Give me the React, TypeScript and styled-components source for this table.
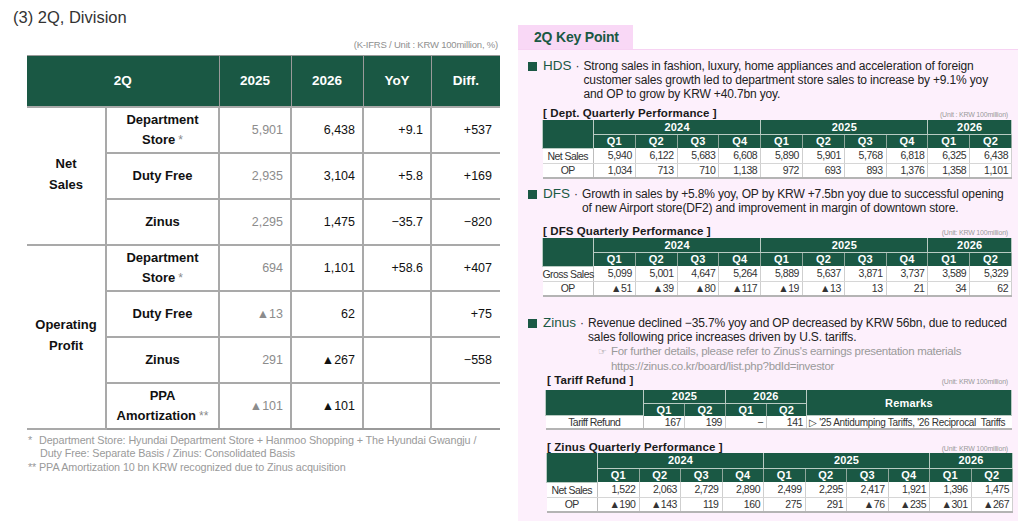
import React from "react";
import styled, { createGlobalStyle } from "styled-components";

const GlobalStyle = createGlobalStyle`
  html, body { margin: 0; padding: 0; background: #ffffff; }
  body {
    width: 1020px; height: 521px; overflow: hidden;
    font-family: "Liberation Sans", Arial, sans-serif;
    color: #222;
  }
  * { box-sizing: border-box; }
`;

const GREEN = "#1a5844";

const Page = styled.div`
  display: flex;
  width: 1020px;
  height: 521px;
`;

/* ---------------- Left ---------------- */
const Left = styled.section`
  width: 518px;
  display: flex;
  flex-direction: column;
`;

const Title = styled.h1`
  margin: 0;
  padding: 7px 0 0 13px;
  font-size: 16.5px;
  line-height: 20px;
  font-weight: 400;
  color: #333;
`;

const UnitNote = styled.div`
  margin-top: 12px;
  padding-right: 20px;
  text-align: right;
  font-size: 9.5px;
  line-height: 12px;
  color: #8f8f8f;
  letter-spacing: -0.2px;
`;

const DivTable = styled.table`
  margin: 4px 0 0 27px;
  width: 473px;
  border-collapse: collapse;
  table-layout: fixed;
`;

const Col = styled.col<{ $w: number }>`
  width: ${(p) => p.$w}px;
`;

const DivTh = styled.th`
  height: 51px;
  padding: 0;
  background: ${GREEN};
  color: #fff;
  font-size: 13.5px;
  font-weight: 700;
  text-align: center;
  border-top: 1px solid #9a9a9a;
  border-left: 1px solid #9a9a9a;
  border-bottom: 2px solid #a9a9a9;
  &:first-child { border-left: none; }
`;

const DivRow = styled.tr<{ $last?: boolean }>`
  height: 46px;
  & > td {
    border-bottom: 2px solid ${(p) => (p.$last ? "#9a9a9a" : "#a9a9a9")};
  }
`;

const GroupCell = styled.td`
  padding: 0 0 3px;
  text-align: center;
  font-size: 13px;
  font-weight: 700;
  line-height: 21px;
  color: #111;
  border-right: 2px solid #a9a9a9;
`;

const LabelCell = styled.td`
  padding: 0;
  text-align: center;
  font-size: 13px;
  font-weight: 700;
  line-height: 20px;
  color: #111;
  border-right: 2px solid #a9a9a9;
`;

const Star = styled.span`
  color: #8a8a8a;
  font-weight: 400;
  font-size: 12px;
  margin-left: 3px;
`;

const ValueCell = styled.td<{ $muted?: boolean }>`
  padding: 0 7px 0 0;
  text-align: right;
  font-size: 12.5px;
  color: ${(p) => (p.$muted ? "#8c8c8c" : "#111")};
  border-right: 2px solid #a9a9a9;
  &:last-child { border-right: none; padding-right: 8px; }
`;

const Footnotes = styled.div`
  margin: 4px 0 0 28px;
  font-size: 10.8px;
  line-height: 13.5px;
  color: #9a9a9a;
  letter-spacing: -0.1px;
`;

const FootLine = styled.div<{ $indent?: number }>`
  padding-left: ${(p) => p.$indent ?? 0}px;
  white-space: nowrap;
`;

const FootMark = styled.span`
  display: inline-block;
  width: 11px;
`;

/* ---------------- Right ---------------- */
const Right = styled.section`
  width: 500px;
  margin-top: 25px;
  display: flex;
  flex-direction: column;
`;

const Tab = styled.div`
  width: 115px;
  height: 24px;
  background: #f9d8f6;
  color: ${GREEN};
  font-size: 14px;
  font-weight: 700;
  line-height: 24px;
  padding-left: 16px;
  letter-spacing: -0.2px;
`;

const Panel = styled.div`
  flex: 1;
  background: #fdf0fc;
  border-top: 1px solid #f7d3f3;
  padding: 8px 7px 0 10px;
  display: flex;
  flex-direction: column;
`;

const Point = styled.div<{ $top: number }>`
  display: flex;
  align-items: flex-start;
  margin-top: ${(p) => p.$top}px;
`;

const Square = styled.span`
  width: 9px;
  height: 9px;
  background: ${GREEN};
  margin-top: 3px;
  flex: none;
`;

const PointLabel = styled.span`
  margin-left: 6px;
  color: ${GREEN};
  font-size: 13.5px;
  line-height: 14px;
  flex: none;
`;

const Bullet = styled.span`
  width: 8px;
  margin-left: 4px;
  font-size: 12px;
  line-height: 14px;
  color: #333;
  flex: none;
`;

const PointText = styled.div`
  font-size: 12px;
  line-height: 14px;
  color: #222;
  letter-spacing: -0.15px;
  white-space: nowrap;
`;

const Note = styled.div`
  padding-left: 10px;
  color: #9a9a9a;
  font-size: 11.5px;
  letter-spacing: -0.3px;
`;

const NoteMark = styled.span`
  display: inline-block;
  width: 13px;
  font-family: "DejaVu Sans", sans-serif;
  font-size: 10px;
  color: #9a9a9a;
`;

const TableHead = styled.div<{ $top: number; $left: number }>`
  display: flex;
  justify-content: space-between;
  align-items: flex-end;
  margin: ${(p) => p.$top}px 3px 0 ${(p) => p.$left}px;
  height: 12px;
`;

const TableTitle = styled.span`
  font-size: 11.5px;
  font-weight: 700;
  line-height: 12px;
  color: #1a1a1a;
  letter-spacing: 0.1px;
`;

const TableUnit = styled.span`
  font-size: 7px;
  line-height: 9px;
  color: #9a9a9a;
  letter-spacing: -0.2px;
`;

const QTable = styled.table<{ $left: number; $w: number; $top: number }>`
  margin: ${(p) => p.$top}px 0 0 ${(p) => p.$left}px;
  width: ${(p) => p.$w}px;
  border-collapse: collapse;
  table-layout: fixed;
`;

const HeadRow = styled.tr<{ $h: number }>`
  height: ${(p) => p.$h}px;
`;

const QTh = styled.th`
  padding: 0;
  background: ${GREEN};
  color: #fff;
  font-size: 11px;
  font-weight: 700;
  line-height: 12px;
  text-align: center;
  border: 1px solid #b9cbc3;
  border-top: none;
  letter-spacing: 0.2px;
`;

const QSubTh = styled(QTh)`
  border-left: 1px solid #8fa79c;
  border-right: 1px solid #8fa79c;
  border-bottom: none;
`;

const BodyRow = styled.tr<{ $h: number; $last?: boolean }>`
  height: ${(p) => p.$h}px;
  background: #ffffff;
  & > td {
    border-bottom: ${(p) => (p.$last ? "2px solid #b4b4b4" : "1px solid #d6d6d6")};
  }
`;

const QLabel = styled.td`
  padding: 0;
  text-align: center;
  font-size: 10.5px;
  line-height: 12px;
  color: #333;
  letter-spacing: -0.55px;
  border-right: 1px solid #bdbdbd;
  white-space: nowrap;
`;

const QVal = styled.td`
  padding: 0 3px 0 0;
  text-align: right;
  font-size: 10.5px;
  line-height: 12px;
  color: #333;
  letter-spacing: -0.45px;
  border-right: 1px solid #cfcfcf;
  white-space: nowrap;
`;

const Remark = styled.td`
  padding: 0 0 0 2px;
  text-align: left;
  font-size: 10px;
  line-height: 11px;
  color: #333;
  letter-spacing: -0.3px;
  white-space: nowrap;
  overflow: hidden;
`;

type QRow = { label: string; values: string[] };

const QUARTERS = ["Q1", "Q2", "Q3", "Q4", "Q1", "Q2", "Q3", "Q4", "Q1", "Q2"];

function QuarterTable({
  rows,
  left,
  width,
  labelW,
  top,
  h,
}: {
  rows: QRow[];
  left: number;
  width: number;
  labelW: number;
  top: number;
  h: [number, number, number, number];
}) {
  const qw = (width - labelW) / 10;
  return (
    <QTable $left={left} $w={width} $top={top}>
      <colgroup>
        <Col $w={labelW} />
        {QUARTERS.map((_, i) => (
          <Col key={i} $w={qw} />
        ))}
      </colgroup>
      <thead>
        <HeadRow $h={h[0]}>
          <QTh rowSpan={2} />
          <QTh colSpan={4}>2024</QTh>
          <QTh colSpan={4}>2025</QTh>
          <QTh colSpan={2}>2026</QTh>
        </HeadRow>
        <HeadRow $h={h[1]}>
          {QUARTERS.map((q, i) => (
            <QSubTh key={i}>{q}</QSubTh>
          ))}
        </HeadRow>
      </thead>
      <tbody>
        {rows.map((r, ri) => (
          <BodyRow key={r.label} $h={h[2 + ri] ?? h[3]} $last={ri === rows.length - 1}>
            <QLabel>{r.label}</QLabel>
            {r.values.map((v, i) => (
              <QVal key={i}>{v}</QVal>
            ))}
          </BodyRow>
        ))}
      </tbody>
    </QTable>
  );
}

const hdsRows: QRow[] = [
  { label: "Net Sales", values: ["5,940", "6,122", "5,683", "6,608", "5,890", "5,901", "5,768", "6,818", "6,325", "6,438"] },
  { label: "OP", values: ["1,034", "713", "710", "1,138", "972", "693", "893", "1,376", "1,358", "1,101"] },
];

const dfsRows: QRow[] = [
  { label: "Gross Sales", values: ["5,099", "5,001", "4,647", "5,264", "5,889", "5,637", "3,871", "3,737", "3,589", "5,329"] },
  { label: "OP", values: ["▲51", "▲39", "▲80", "▲117", "▲19", "▲13", "13", "21", "34", "62"] },
];

const zinusRows: QRow[] = [
  { label: "Net Sales", values: ["1,522", "2,063", "2,729", "2,890", "2,499", "2,295", "2,417", "1,921", "1,396", "1,475"] },
  { label: "OP", values: ["▲190", "▲143", "119", "160", "275", "291", "▲76", "▲235", "▲301", "▲267"] },
];

type DivLine = {
  group?: { text: React.ReactNode; span: number };
  label: React.ReactNode;
  v: [string, string, string, string];
};

const divLines: DivLine[] = [
  {
    group: { text: <>Net<br />Sales</>, span: 3 },
    label: <>Department<br />Store<Star>*</Star></>,
    v: ["5,901", "6,438", "+9.1", "+537"],
  },
  { label: "Duty Free", v: ["2,935", "3,104", "+5.8", "+169"] },
  { label: "Zinus", v: ["2,295", "1,475", "−35.7", "−820"] },
  {
    group: { text: <>Operating<br />Profit</>, span: 4 },
    label: <>Department<br />Store<Star>*</Star></>,
    v: ["694", "1,101", "+58.6", "+407"],
  },
  { label: "Duty Free", v: ["▲13", "62", "", "+75"] },
  { label: "Zinus", v: ["291", "▲267", "", "−558"] },
  { label: <>PPA<br />Amortization<Star>**</Star></>, v: ["▲101", "▲101", "", ""] },
];

export default function App() {
  return (
    <>
      <GlobalStyle />
      <Page>
        <Left>
          <Title>(3) 2Q, Division</Title>
          <UnitNote>(K-IFRS / Unit : KRW 100million, %)</UnitNote>
          <DivTable>
            <colgroup>
              <Col $w={79} />
              <Col $w={113} />
              <Col $w={72} />
              <Col $w={72} />
              <Col $w={68} />
              <Col $w={69} />
            </colgroup>
            <thead>
              <tr>
                <DivTh colSpan={2}>2Q</DivTh>
                <DivTh>2025</DivTh>
                <DivTh>2026</DivTh>
                <DivTh>YoY</DivTh>
                <DivTh>Diff.</DivTh>
              </tr>
            </thead>
            <tbody>
              {divLines.map((l, i) => (
                <DivRow key={i} $last={i === divLines.length - 1}>
                  {l.group && <GroupCell rowSpan={l.group.span}>{l.group.text}</GroupCell>}
                  <LabelCell>{l.label}</LabelCell>
                  <ValueCell $muted>{l.v[0]}</ValueCell>
                  <ValueCell>{l.v[1]}</ValueCell>
                  <ValueCell>{l.v[2]}</ValueCell>
                  <ValueCell>{l.v[3]}</ValueCell>
                </DivRow>
              ))}
            </tbody>
          </DivTable>
          <Footnotes>
            <FootLine>
              <FootMark>*</FootMark>Department Store: Hyundai Department Store + Hanmoo Shopping + The Hyundai Gwangju /
            </FootLine>
            <FootLine $indent={12}>Duty Free: Separate Basis / Zinus: Consolidated Basis</FootLine>
            <FootLine>
              <FootMark>**</FootMark>PPA Amortization 10 bn KRW recognized due to Zinus acquisition
            </FootLine>
          </Footnotes>
        </Left>

        <Right>
          <Tab>2Q Key Point</Tab>
          <Panel>
            <Point $top={1}>
              <Square />
              <PointLabel>HDS</PointLabel>
              <Bullet>·</Bullet>
              <PointText>
                Strong sales in fashion, luxury, home appliances and acceleration of foreign
                <br />
                customer sales growth led to department store sales to increase by +9.1% yoy
                <br />
                and OP to grow by KRW +40.7bn yoy.
              </PointText>
            </Point>
            <TableHead $top={6} $left={15}>
              <TableTitle>[ Dept. Quarterly Performance ]</TableTitle>
              <TableUnit>(Unit : KRW 100million)</TableUnit>
            </TableHead>
            <QuarterTable rows={hdsRows} left={14} width={469} labelW={51} top={1} h={[14, 14, 15, 15]} />

            <Point $top={8}>
              <Square />
              <PointLabel>DFS</PointLabel>
              <Bullet>·</Bullet>
              <PointText>
                Growth in sales by +5.8% yoy, OP by KRW +7.5bn yoy due to successful opening
                <br />
                of new Airport store(DF2) and improvement in margin of downtown store.
              </PointText>
            </Point>
            <TableHead $top={10} $left={15}>
              <TableTitle>[ DFS Quarterly Performance ]</TableTitle>
              <TableUnit>(Unit: KRW 100million)</TableUnit>
            </TableHead>
            <QuarterTable rows={dfsRows} left={14} width={469} labelW={51} top={1} h={[14, 14, 15, 15]} />

            <Point $top={19}>
              <Square />
              <PointLabel>Zinus</PointLabel>
              <Bullet>·</Bullet>
              <PointText>
                Revenue declined −35.7% yoy and OP decreased by KRW 56bn, due to reduced
                <br />
                sales following price increases driven by U.S. tariffs.
                <Note>
                  <NoteMark>☞</NoteMark>For further details, please refer to Zinus's earnings presentation materials
                  <br />
                  <NoteMark />https://zinus.co.kr/board/list.php?bdId=investor
                </Note>
              </PointText>
            </Point>
            <TableHead $top={1} $left={19}>
              <TableTitle>[ Tariff Refund ]</TableTitle>
              <TableUnit>(Unit: KRW 100million)</TableUnit>
            </TableHead>
            <QTable $left={17} $w={466} $top={4}>
              <colgroup>
                <Col $w={98} />
                <Col $w={41} />
                <Col $w={41} />
                <Col $w={41} />
                <Col $w={40} />
                <Col $w={205} />
              </colgroup>
              <thead>
                <HeadRow $h={13}>
                  <QTh rowSpan={2} />
                  <QTh colSpan={2}>2025</QTh>
                  <QTh colSpan={2}>2026</QTh>
                  <QTh rowSpan={2}>Remarks</QTh>
                </HeadRow>
                <HeadRow $h={12}>
                  <QSubTh>Q1</QSubTh>
                  <QSubTh>Q2</QSubTh>
                  <QSubTh>Q1</QSubTh>
                  <QSubTh>Q2</QSubTh>
                </HeadRow>
              </thead>
              <tbody>
                <BodyRow $h={12} $last>
                  <QLabel>Tariff Refund</QLabel>
                  <QVal>167</QVal>
                  <QVal>199</QVal>
                  <QVal>−</QVal>
                  <QVal>141</QVal>
                  <Remark>▷ '25 Antidumping Tariffs, '26 Reciprocal&nbsp; Tariffs</Remark>
                </BodyRow>
              </tbody>
            </QTable>

            <TableHead $top={11} $left={19}>
              <TableTitle>[ Zinus Quarterly Performance ]</TableTitle>
              <TableUnit>(Unit: KRW 100million)</TableUnit>
            </TableHead>
            <QuarterTable rows={zinusRows} left={18} width={466} labelW={51} top={0} h={[15, 14, 15, 15]} />
          </Panel>
        </Right>
      </Page>
    </>
  );
}
